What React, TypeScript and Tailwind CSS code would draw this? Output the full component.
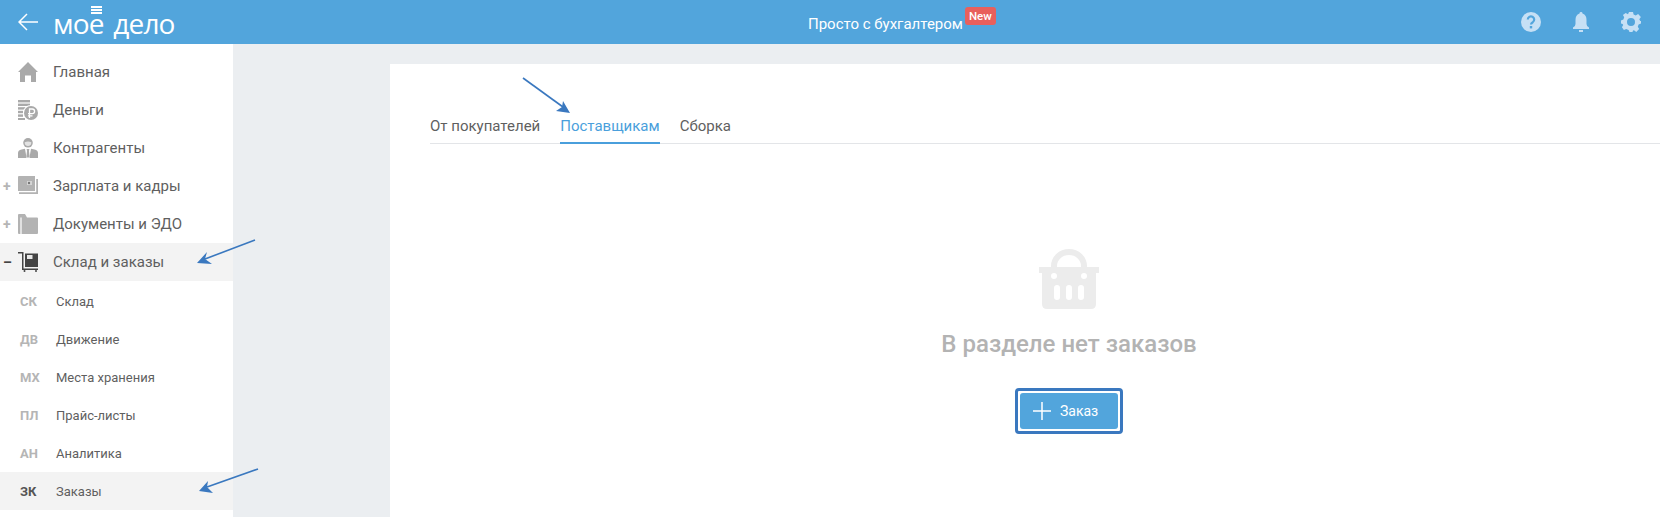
import React from 'react';

const HomeIcon = () => (
  <svg width="20" height="20" viewBox="0 0 20 20" fill="#a9a9a9">
    <path d="M10 0 L20 10 L18 10 L18 20 L13 20 L13 13.5 L7 13.5 L7 20 L2 20 L2 10 L0 10 Z" />
  </svg>
);

const MoneyIcon = () => (
  <svg width="20" height="20" viewBox="0 0 20 20" fill="#a9a9a9">
    <rect x="0" y="0" width="12" height="2.4" />
    <rect x="0" y="3.6" width="12" height="2.4" />
    <rect x="0" y="7.2" width="8" height="2.4" />
    <rect x="0" y="10.8" width="5" height="2.4" />
    <rect x="0" y="14.4" width="5" height="2.4" />
    <rect x="0" y="18" width="7" height="2" />
    <circle cx="13" cy="13" r="8" fill="#fff" />
    <circle cx="13" cy="13" r="7" />
    <path d="M11.5 18 V9 H14.3 A2.2 2.2 0 0 1 14.3 13.6 H10 M10 15.8 H14.5" fill="none" stroke="#fff" strokeWidth="1.3" />
  </svg>
);

const PersonIcon = () => (
  <svg width="20" height="20" viewBox="0 0 20 20" fill="#a9a9a9">
    <circle cx="10" cy="4.8" r="4.8" />
    <path d="M6.6 4.2 Q10 2.6 13.4 4.2 L13 6.4 Q10 9.6 7 6.4 Z" fill="#e2e2e2" />
    <path d="M0 20 V15 Q0 12.4 3.5 11.6 L7 10.8 L8.6 20 Z M13 10.8 L16.5 11.6 Q20 12.4 20 15 V20 H11.4 Z" />
    <path d="M8.6 11 H11.4 L11 13 L11.6 18.5 L10 20 L8.4 18.5 L9 13 Z" />
  </svg>
);

const WalletIcon = () => (
  <svg width="20" height="20" viewBox="0 0 20 20" fill="#b3b3b3">
    <path d="M0 1 Q0 0 1 0 H17 V15 H0 Z" />
    <path d="M18.2 3 H20 V18 H1 V16.2 H18.2 Z" />
    <rect x="9" y="5" width="5" height="4" fill="#d6d6d6" />
    <circle cx="11" cy="7" r="1.2" fill="#777" />
  </svg>
);

const FolderIcon = () => (
  <svg width="20" height="20" viewBox="0 0 20 20" fill="#b3b3b3">
    <path d="M0 1 Q0 0 1 0 H7 L9 3.5 H19 Q20 3.5 20 4.5 V19 Q20 20 19 20 H1 Q0 20 0 19 Z" />
    <rect x="2.4" y="3.5" width="1.2" height="16.5" fill="#fff" />
  </svg>
);

const CartIcon = () => (
  <svg width="20" height="20" viewBox="0 0 20 20" fill="#444">
    <path d="M0 0 H5.5 V16.6 H20 V18 H4 V1.4 H0 Z" />
    <rect x="7" y="1.5" width="13" height="13.5" />
    <rect x="9" y="3" width="5.5" height="4" fill="#e8e8e8" />
    <circle cx="6.5" cy="19" r="1" />
    <circle cx="18" cy="19" r="1" />
  </svg>
);

const topItems = [
  { label: 'Главная', icon: <HomeIcon /> },
  { label: 'Деньги', icon: <MoneyIcon /> },
  { label: 'Контрагенты', icon: <PersonIcon /> },
  { label: 'Зарплата и кадры', icon: <WalletIcon />, mark: '+' },
  { label: 'Документы и ЭДО', icon: <FolderIcon />, mark: '+' },
  { label: 'Склад и заказы', icon: <CartIcon />, mark: '–', active: true },
];

const subItems = [
  { code: 'СК', label: 'Склад' },
  { code: 'ДВ', label: 'Движение' },
  { code: 'МХ', label: 'Места хранения' },
  { code: 'ПЛ', label: 'Прайс-листы' },
  { code: 'АН', label: 'Аналитика' },
  { code: 'ЗК', label: 'Заказы', active: true },
];

const App: React.FC = () => {
  return (
    <div className="relative h-[517px] w-[1660px] overflow-hidden bg-[#ebeef1] font-['Roboto',sans-serif]">
      <header className="flex h-[44px] items-center bg-[#52a5dc] text-white">
        <div className="flex w-[808px] items-center pl-[18px]">
          <svg width="20" height="18" viewBox="0 0 20 18" fill="none" stroke="#fff" strokeWidth="1.5">
            <path d="M20 9 H1 M9 1 L1 9 L9 17" />
          </svg>
          <div className="relative ml-[15px] mt-[2px] font-['Open_Sans',sans-serif] text-[28px] font-medium leading-[40px] tracking-[-0.8px] [word-spacing:3px]">
            мое дело
            <div className="absolute left-[38px] top-[3px] flex w-[11px] flex-col gap-[1px]">
              <div className="h-[2px] bg-white" />
              <div className="h-[2px] bg-white" />
              <div className="h-[2px] bg-white" />
            </div>
          </div>
        </div>
        <div className="flex items-start">
          <span className="mt-[3px] text-[15px] leading-[32px]">Просто с бухгалтером</span>
          <span className="ml-[2px] mt-[2px] rounded-[3px] bg-[#e8605c] px-[4px] text-[11.5px] font-medium leading-[18px]">New</span>
        </div>
        <div className="ml-auto flex items-center gap-[32px] pr-[19px]">
          <svg width="20" height="20" viewBox="0 0 20 20">
            <circle cx="10" cy="10" r="10" fill="#c6e0f5" />
            <path d="M6.8 7.6 A3.2 3.2 0 1 1 11.8 10.2 Q10 11.2 10 12.6" fill="none" stroke="#52a5dc" strokeWidth="2.2" />
            <rect x="8.8" y="14" width="2.4" height="2.4" fill="#52a5dc" />
          </svg>
          <svg width="16" height="20" viewBox="0 0 16 20" fill="#c6e0f5">
            <path d="M8 0 A1.5 1.5 0 0 1 9.5 1.6 C12.5 2.4 13.5 5 13.5 8 V12 Q13.5 14.5 16 15.5 V17 H0 V15.5 Q2.5 14.5 2.5 12 V8 C2.5 5 3.5 2.4 6.5 1.6 A1.5 1.5 0 0 1 8 0 Z" />
            <rect x="6" y="18" width="4" height="2" />
          </svg>
          <svg width="20" height="20" viewBox="0 0 20 20">
            <path
              fill="#c6e0f5"
              fillRule="evenodd"
              d="M8 0 H12 L12.6 2.6 L14.8 3.5 L17.1 2.1 L19.9 4.9 L18.3 7.2 L19.2 9 H20 V11.5 L17.6 12.6 L16.8 14.8 L18.1 17.1 L15.3 19.9 L13 18.3 L12 18.6 L11.5 20 H8.5 L7.6 17.9 L5.2 16.9 L2.9 18.1 L0.9 15.3 L2.2 13 L1.6 12 L0 11.5 V8.5 L2.4 7.4 L3.2 5.2 L1.9 2.9 L4.7 0.9 L7 2.2 Z M10 6 A4 4 0 1 0 10 14 A4 4 0 1 0 10 6 Z"
            />
          </svg>
        </div>
      </header>

      <div className="flex h-[473px]">
        <aside className="w-[233px] bg-white pt-[9px] text-[#5f5f5f]">
          {topItems.map((item) => (
            <div key={item.label} className={`flex h-[38px] items-center ${item.active ? 'bg-[#f3f3f3]' : ''}`}>
              <span className={`w-[18px] pl-[3px] text-[14px] font-bold leading-none ${item.active ? 'text-[#444]' : 'text-[#b5b5b5]'}`}>
                {item.mark}
              </span>
              {item.icon}
              <span className="ml-[15px] text-[15px]">{item.label}</span>
            </div>
          ))}
          <div className="pt-[1px]">
            {subItems.map((item) => (
              <div key={item.code} className={`flex h-[38px] items-center pl-[20px] pt-[2px] ${item.active ? 'bg-[#f3f3f3]' : ''}`}>
                <span className={`w-[36px] text-[13px] font-bold ${item.active ? 'text-[#555]' : 'text-[#b5b5b5]'}`}>{item.code}</span>
                <span className="text-[13px]">{item.label}</span>
              </div>
            ))}
          </div>
        </aside>

        <main className="ml-[157px] mt-[20px] flex-1 bg-white pl-[40px]">
          <div className="mt-[47px] flex h-[33px] gap-[20px] border-b border-[#e3e5e8] text-[15px] text-[#5f5f5f]">
            <span className="leading-[30px]">От покупателей</span>
            <span className="h-[33px] border-b-2 border-[#4a9fdc] leading-[30px] text-[#4a9fdc]">Поставщикам</span>
            <span className="leading-[30px]">Сборка</span>
          </div>

          <div className="flex flex-col items-center pl-[48px] pt-[105px]">
            <svg width="60" height="60" viewBox="0 0 60 60" fill="#ececec">
              <path d="M12 18 V17 A18 17 0 0 1 48 17 V18 H42 V17 A12 11 0 0 0 18 17 V18 Z" />
              <path
                fillRule="evenodd"
                d="M0 18 H60 V24 H57 V55 Q57 60 52 60 H8 Q3 60 3 55 V24 H0 Z M15 24 A3 3 0 1 0 15 30 A3 3 0 1 0 15 24 Z M45 24 A3 3 0 1 0 45 30 A3 3 0 1 0 45 24 Z M18 36 A3 3 0 0 0 15 39 V48 A3 3 0 0 0 21 48 V39 A3 3 0 0 0 18 36 Z M30 36 A3 3 0 0 0 27 39 V48 A3 3 0 0 0 33 48 V39 A3 3 0 0 0 30 36 Z M42 36 A3 3 0 0 0 39 39 V48 A3 3 0 0 0 45 48 V39 A3 3 0 0 0 42 36 Z"
              />
            </svg>
            <h2 className="mt-[19px] text-[24px] font-medium leading-[32px] text-[#b3b3b3]">В разделе нет заказов</h2>
            <div className="mt-[28px] rounded-[4px] border-[3px] border-[#3a78bf] p-[2px]">
              <button className="flex h-[36px] w-[98px] items-center rounded-[3px] bg-[#52a5dc] pl-[13px] text-[14px] text-white">
                <svg width="18" height="18" viewBox="0 0 18 18" stroke="#fff" strokeWidth="1.5">
                  <path d="M9 0 V18 M0 9 H18" />
                </svg>
                <span className="ml-[9px]">Заказ</span>
              </button>
            </div>
          </div>
        </main>
      </div>

      {/* стрелки-пометки поверх скриншота */}
      <svg className="pointer-events-none absolute left-0 top-0" width="1660" height="517" fill="#3a78bf" stroke="none">
        <path d="M523 78 L563 107" stroke="#3a78bf" strokeWidth="1.6" />
        <path d="M570 113 L563 101 L562 107 L556 111 Z" />
        <path d="M255 240 L205 259" stroke="#3a78bf" strokeWidth="1.6" />
        <path d="M197 263 L207 252 L205 259 L212 264 Z" />
        <path d="M258 469 L207 487" stroke="#3a78bf" strokeWidth="1.6" />
        <path d="M199 491 L208 481 L207 487 L213 493 Z" />
      </svg>
    </div>
  );
};

export default App;
